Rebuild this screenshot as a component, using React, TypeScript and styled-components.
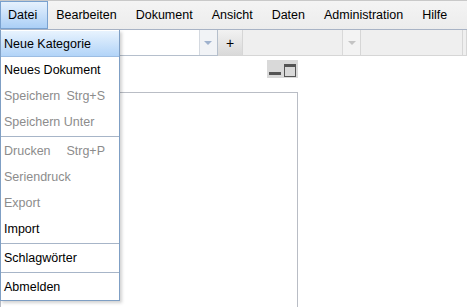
import React from 'react';
import styled, { createGlobalStyle } from 'styled-components';

const GlobalStyle = createGlobalStyle`
  html, body {
    margin: 0;
    padding: 0;
    background: #ffffff;
    font-family: "Liberation Sans", Arial, sans-serif;
    font-size: 12.5px;
    color: #000;
  }
  * { box-sizing: border-box; }
`;

const Page = styled.div`
  position: relative;
  width: 467px;
  height: 307px;
  overflow: hidden;
`;

const MenuBar = styled.div`
  display: flex;
  height: 30px;
  background: linear-gradient(#f4f4f4, #ececec);
  border-top: 1px solid #c9c9c9;
  border-bottom: 1px solid #a8b3c5;
`;

const MenuItem = styled.div<{ $active?: boolean }>`
  display: flex;
  align-items: center;
  height: 28px;
  padding: 0 10px 0 7px;
  border: 1px solid ${p => (p.$active ? '#79a1cf' : 'transparent')};
  background: ${p => (p.$active ? 'linear-gradient(#e6f1fd, #abcff6)' : 'transparent')};
  white-space: nowrap;
`;

const Toolbar = styled.div`
  display: flex;
  height: 26px;
  padding-left: 2px;
`;

const ComboBox = styled.div<{ $width: number; $disabled?: boolean }>`
  display: flex;
  width: ${p => p.$width}px;
  height: 26px;
  border: 1px solid ${p => (p.$disabled ? '#d6d6d6' : '#b5bfcc')};
  border-top: none;
  background: ${p => (p.$disabled ? '#efefef' : '#ffffff')};
`;

const ComboField = styled.div`
  flex: 1;
`;

const ComboArrow = styled.div<{ $disabled?: boolean }>`
  display: flex;
  align-items: center;
  justify-content: center;
  width: 18px;
  border-left: 1px solid ${p => (p.$disabled ? '#d9d9d9' : '#d4d9e0')};
  background: ${p => (p.$disabled ? '#f3f3f3' : '#f1f3f6')};
  &::after {
    content: '';
    border-left: 4px solid transparent;
    border-right: 4px solid transparent;
    border-top: 4px solid ${p => (p.$disabled ? '#c4c4c4' : '#9fb2ce')};
  }
`;

const PlusButton = styled.div`
  display: flex;
  align-items: center;
  justify-content: center;
  width: 25px;
  height: 26px;
  border-bottom: 1px solid #d6d6d6;
  background: linear-gradient(#f2f2f2, #d9d9d9);
  font-size: 14px;
`;

const Spacer = styled.div<{ $width: number }>`
  width: ${p => p.$width}px;
  height: 26px;
  background: #efefef;
  border-bottom: 1px solid #d6d6d6;
  border-right: 1px solid #d6d6d6;
`;

const Content = styled.div`
  display: flex;
  flex-direction: column;
  align-items: flex-end;
  width: 298px;
  padding-top: 4px;
`;

const WindowButtons = styled.div`
  display: flex;
  align-items: flex-end;
  gap: 3px;
  height: 18px;
  padding: 2px 2px 1px 2px;
  background: #d9d9d9;
`;

const Minimize = styled.div`
  width: 12px;
  height: 3px;
  background: #555555;
  margin-bottom: 2px;
`;

const Maximize = styled.div`
  width: 12px;
  height: 13px;
  border: 1px solid #555555;
  border-top-width: 3px;
`;

const Panel = styled.div`
  width: 298px;
  height: 230px;
  margin-top: 14px;
  border: 1px solid #b9bdc5;
  border-bottom: none;
  background: #ffffff;
`;

const Dropdown = styled.div`
  position: absolute;
  left: 0;
  top: 30px;
  width: 120px;
  padding: 1px 0 0 0;
  background: #ffffff;
  border: 1px solid #7f9fc4;
  border-top: none;
  box-shadow: 2px 2px 3px rgba(0, 0, 0, 0.18);
`;

const DropItem = styled.div<{ $active?: boolean; $disabled?: boolean }>`
  display: flex;
  justify-content: space-between;
  align-items: center;
  height: 26px;
  padding: 0 14px 0 3px;
  color: ${p => (p.$disabled ? '#8c8c8c' : '#000000')};
  border-bottom: 1px solid ${p => (p.$active ? '#9cbde3' : 'transparent')};
  background: ${p => (p.$active ? 'linear-gradient(#e8f3fe, #b2d4f8)' : 'transparent')};
  white-space: nowrap;
`;

const Shortcut = styled.span``;

const Separator = styled.div`
  height: 1px;
  margin: 1px 0;
  background: #a7b5c8;
`;

const menus = ['Datei', 'Bearbeiten', 'Dokument', 'Ansicht', 'Daten', 'Administration', 'Hilfe'];

type Entry = { label: string; shortcut?: string; disabled?: boolean; active?: boolean } | 'sep';

const entries: Entry[] = [
  { label: 'Neue Kategorie', active: true },
  { label: 'Neues Dokument' },
  { label: 'Speichern', shortcut: 'Strg+S', disabled: true },
  { label: 'Speichern Unter', disabled: true },
  'sep',
  { label: 'Drucken', shortcut: 'Strg+P', disabled: true },
  { label: 'Seriendruck', disabled: true },
  { label: 'Export', disabled: true },
  { label: 'Import' },
  'sep',
  { label: 'Schlagwörter' },
  'sep',
  { label: 'Abmelden' },
];

const App: React.FC = () => {
  return (
    <Page>
      <GlobalStyle />
      <MenuBar>
        {menus.map((m, i) => (
          <MenuItem key={m} $active={i === 0}>
            {m}
          </MenuItem>
        ))}
      </MenuBar>
      <Toolbar>
        <ComboBox $width={216}>
          <ComboField />
          <ComboArrow />
        </ComboBox>
        <PlusButton>+</PlusButton>
        <ComboBox $width={119} $disabled>
          <ComboField />
          <ComboArrow $disabled />
        </ComboBox>
        <Spacer $width={102} />
        <Spacer $width={4} />
      </Toolbar>
      <Content>
        <WindowButtons>
          <Minimize />
          <Maximize />
        </WindowButtons>
        <Panel />
      </Content>
      <Dropdown>
        {entries.map((e, i) =>
          e === 'sep' ? (
            <Separator key={i} />
          ) : (
            <DropItem key={i} $active={e.active} $disabled={e.disabled}>
              <span>{e.label}</span>
              {e.shortcut && <Shortcut>{e.shortcut}</Shortcut>}
            </DropItem>
          )
        )}
      </Dropdown>
    </Page>
  );
};

export default App;
